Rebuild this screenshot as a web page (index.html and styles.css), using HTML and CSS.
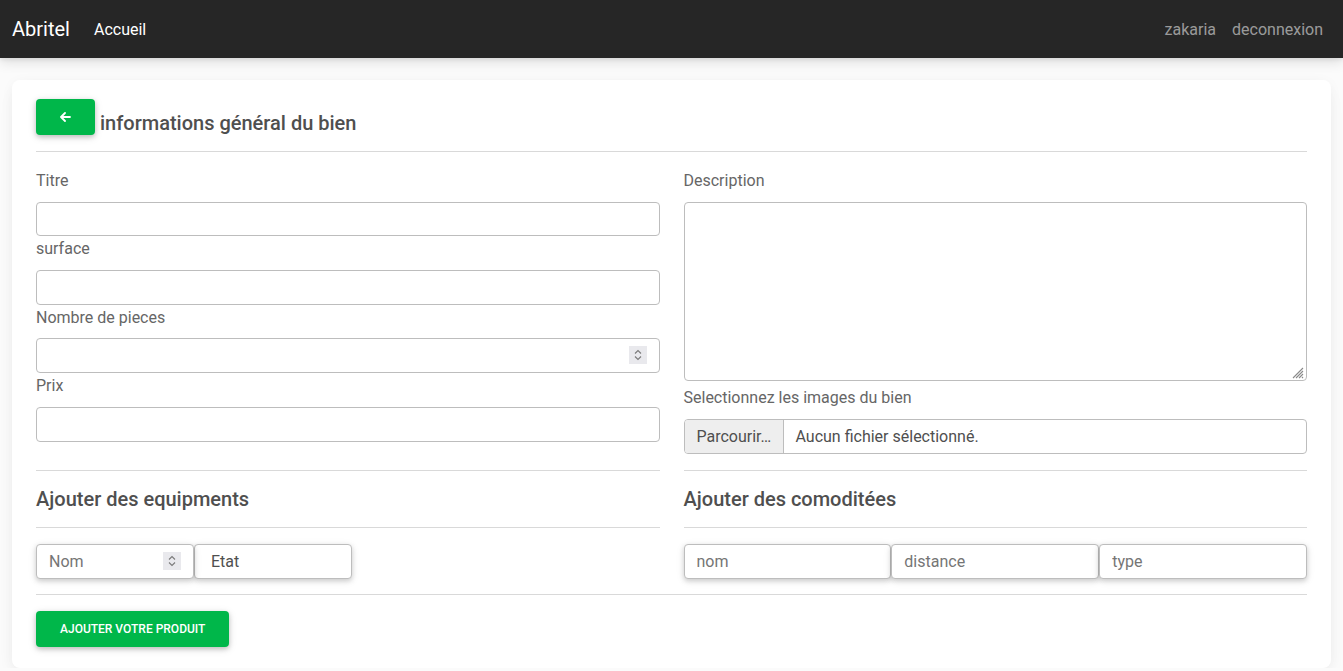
FILE: index.html
```html
<!DOCTYPE html>
<html lang="fr">
<head>
<meta charset="utf-8">
<title>Abritel</title>
<link rel="stylesheet" href="styles.css">
</head>
<body>
<nav class="navbar">
  <div class="nav-left">
    <a class="brand" href="#">Abritel</a>
    <a class="nav-link active" href="#">Accueil</a>
  </div>
  <div class="nav-right">
    <a class="nav-link" href="#">zakaria</a>
    <a class="nav-link" href="#">deconnexion</a>
  </div>
</nav>

<main class="card">
  <div class="card-head">
    <button class="btn btn-back" type="button" aria-label="retour">
      <svg width="11" height="10" viewBox="0 0 11 10"><path d="M5 1 1 5l4 4M1.3 5H10" fill="none" stroke="#fff" stroke-width="1.8" stroke-linecap="round" stroke-linejoin="round"/></svg>
    </button>
    <h5 class="title">informations général du bien</h5>
  </div>
  <hr class="sep">

  <div class="grid">
    <div class="col">
      <label class="lbl">Titre</label>
      <input class="field" type="text">
      <label class="lbl">surface</label>
      <input class="field" type="text">
      <label class="lbl">Nombre de pieces</label>
      <div class="num-wrap">
        <input class="field" type="number">
        <span class="spin"><svg width="8" height="12" viewBox="0 0 8 12"><path d="M1 4.5 4 1.5l3 3M1 7.5l3 3 3-3" fill="none" stroke="#7a7a7a" stroke-width="1.1"/></svg></span>
      </div>
      <label class="lbl">Prix</label>
      <input class="field" type="text">
    </div>
    <div class="col">
      <label class="lbl">Description</label>
      <div class="area-wrap">
        <textarea class="field area"></textarea>
        <svg class="grip" width="13" height="13" viewBox="0 0 13 13"><path d="M12 2 2 12M12 5 5 12M12 8 8 12M12 11l-1 1" stroke="#8a8a8a" stroke-width="1.1" fill="none"/></svg>
      </div>
      <label class="lbl">Selectionnez les images du bien</label>
      <div class="file">
        <span class="file-btn">Parcourir…</span>
        <span class="file-name">Aucun fichier sélectionné.</span>
      </div>
    </div>

    <div class="col section">
      <hr class="sep">
      <h5 class="sub">Ajouter des equipments</h5>
      <hr class="sep">
      <div class="inline-row">
        <div class="num-wrap w158">
          <input class="field shadow" type="number" placeholder="Nom">
          <span class="spin"><svg width="8" height="12" viewBox="0 0 8 12"><path d="M1 4.5 4 1.5l3 3M1 7.5l3 3 3-3" fill="none" stroke="#7a7a7a" stroke-width="1.1"/></svg></span>
        </div>
        <input class="field shadow w158 dark" type="text" value="Etat" readonly>
      </div>
    </div>
    <div class="col section">
      <hr class="sep">
      <h5 class="sub">Ajouter des comoditées</h5>
      <hr class="sep">
      <div class="inline-row three">
        <input class="field shadow" type="text" placeholder="nom">
        <input class="field shadow" type="text" placeholder="distance">
        <input class="field shadow" type="text" placeholder="type">
      </div>
    </div>
  </div>

  <hr class="sep sep-end">
  <button class="btn btn-submit" type="button">Ajouter votre produit</button>
</main>
</body>
</html>
```

FILE: styles.css
```css
* { box-sizing: border-box; }

html, body {
  margin: 0;
  padding: 0;
}

body {
  background: #fbfbfb;
  font-family: Roboto, "Liberation Sans", Arial, sans-serif;
  font-size: 16px;
  color: #4f4f4f;
  line-height: 1.6;
}

a { text-decoration: none; }

.navbar {
  height: 58px;
  background: #262626;
  display: flex;
  align-items: center;
  justify-content: space-between;
  padding: 0 20px 0 12px;
  box-shadow: 0 4px 12px rgba(0,0,0,.12), 0 2px 4px rgba(0,0,0,.06);
}

.nav-left, .nav-right {
  display: flex;
  align-items: center;
}

.brand {
  color: #fff;
  font-size: 20px;
  line-height: 30px;
  margin-right: 24px;
}

.nav-link {
  color: rgba(255,255,255,.55);
  font-size: 16px;
  line-height: 26px;
  padding-top: 2px;
}

.nav-link.active { color: #fff; }

.nav-right .nav-link + .nav-link { margin-left: 16px; }

.card {
  margin: 22px 12px 0;
  background: #fff;
  border-radius: 8px;
  padding: 19px 24px 21px;
  box-shadow: 0 2px 15px -3px rgba(0,0,0,.07), 0 10px 20px -2px rgba(0,0,0,.04);
}

.card-head {
  display: flex;
  align-items: flex-end;
  gap: 5px;
}

.btn {
  border: 0;
  border-radius: 4px;
  background: #00b74a;
  color: #fff;
  cursor: pointer;
  box-shadow: 0 2px 5px 0 rgba(0,0,0,.2), 0 2px 10px 0 rgba(0,0,0,.1);
  font-family: inherit;
}

.btn-back {
  width: 59px;
  height: 36px;
  display: flex;
  align-items: center;
  justify-content: center;
  padding: 0;
}

.title {
  margin: 0;
  font-size: 20px;
  font-weight: 500;
  line-height: 24px;
  color: #4f4f4f;
}

.sep {
  border: 0;
  border-top: 1px solid #d9d9d9;
  margin: 16px 0;
}

.sep-end { margin-top: 15px; }

.grid {
  display: grid;
  grid-template-columns: 1fr 1fr;
  column-gap: 24px;
}

.col {
  display: flex;
  flex-direction: column;
  min-width: 0;
}

.lbl {
  display: block;
  color: #666;
  font-size: 16px;
  line-height: 25.6px;
  margin-bottom: 8px;
}

.field {
  display: block;
  width: 100%;
  height: 34.8px;
  border: 1px solid #bdbdbd;
  border-radius: 4px;
  padding: 0 12px;
  font-family: inherit;
  font-size: 16px;
  color: #4f4f4f;
  background: #fff;
  outline: none;
}

.field::placeholder { color: #757575; }

input[type=number] { -moz-appearance: textfield; appearance: textfield; }
input[type=number]::-webkit-inner-spin-button,
input[type=number]::-webkit-outer-spin-button { -webkit-appearance: none; margin: 0; }

.num-wrap {
  position: relative;
}

.spin {
  position: absolute;
  right: 13px;
  top: 8px;
  width: 18px;
  height: 18px;
  background: #e9e9ed;
  display: flex;
  align-items: center;
  justify-content: center;
  pointer-events: none;
}

.area-wrap {
  position: relative;
  margin-bottom: 4.5px;
}

.area {
  height: 179px;
  resize: none;
  padding: 6px 12px;
}

.grip {
  position: absolute;
  right: 3px;
  bottom: 2px;
  pointer-events: none;
}

.file {
  display: flex;
  height: 35.8px;
  border: 1px solid #bdbdbd;
  border-radius: 4px;
  overflow: hidden;
}

.file-btn {
  width: 99px;
  background: #eeeeee;
  border-right: 1px solid #bdbdbd;
  display: flex;
  align-items: center;
  padding-left: 12px;
  color: #4f4f4f;
}

.file-name {
  display: flex;
  align-items: center;
  padding-left: 12px;
  color: #4f4f4f;
}

.section .sub {
  margin: 0;
  font-size: 20px;
  font-weight: 500;
  line-height: 24px;
  color: #4f4f4f;
}

.inline-row {
  display: flex;
}

.inline-row.three .field { flex: 1 1 0; }

.shadow {
  box-shadow: 0 2px 5px 0 rgba(0,0,0,.16), 0 2px 10px 0 rgba(0,0,0,.08);
}

.w158 {
  width: 158px;
  flex: 0 0 158px;
}

.dark { padding-left: 16px; color: #4f4f4f; }

.btn-submit {
  height: 36px;
  padding: 0 24px;
  font-size: 12px;
  font-weight: 500;
  text-transform: uppercase;
  letter-spacing: 0;
}
```
